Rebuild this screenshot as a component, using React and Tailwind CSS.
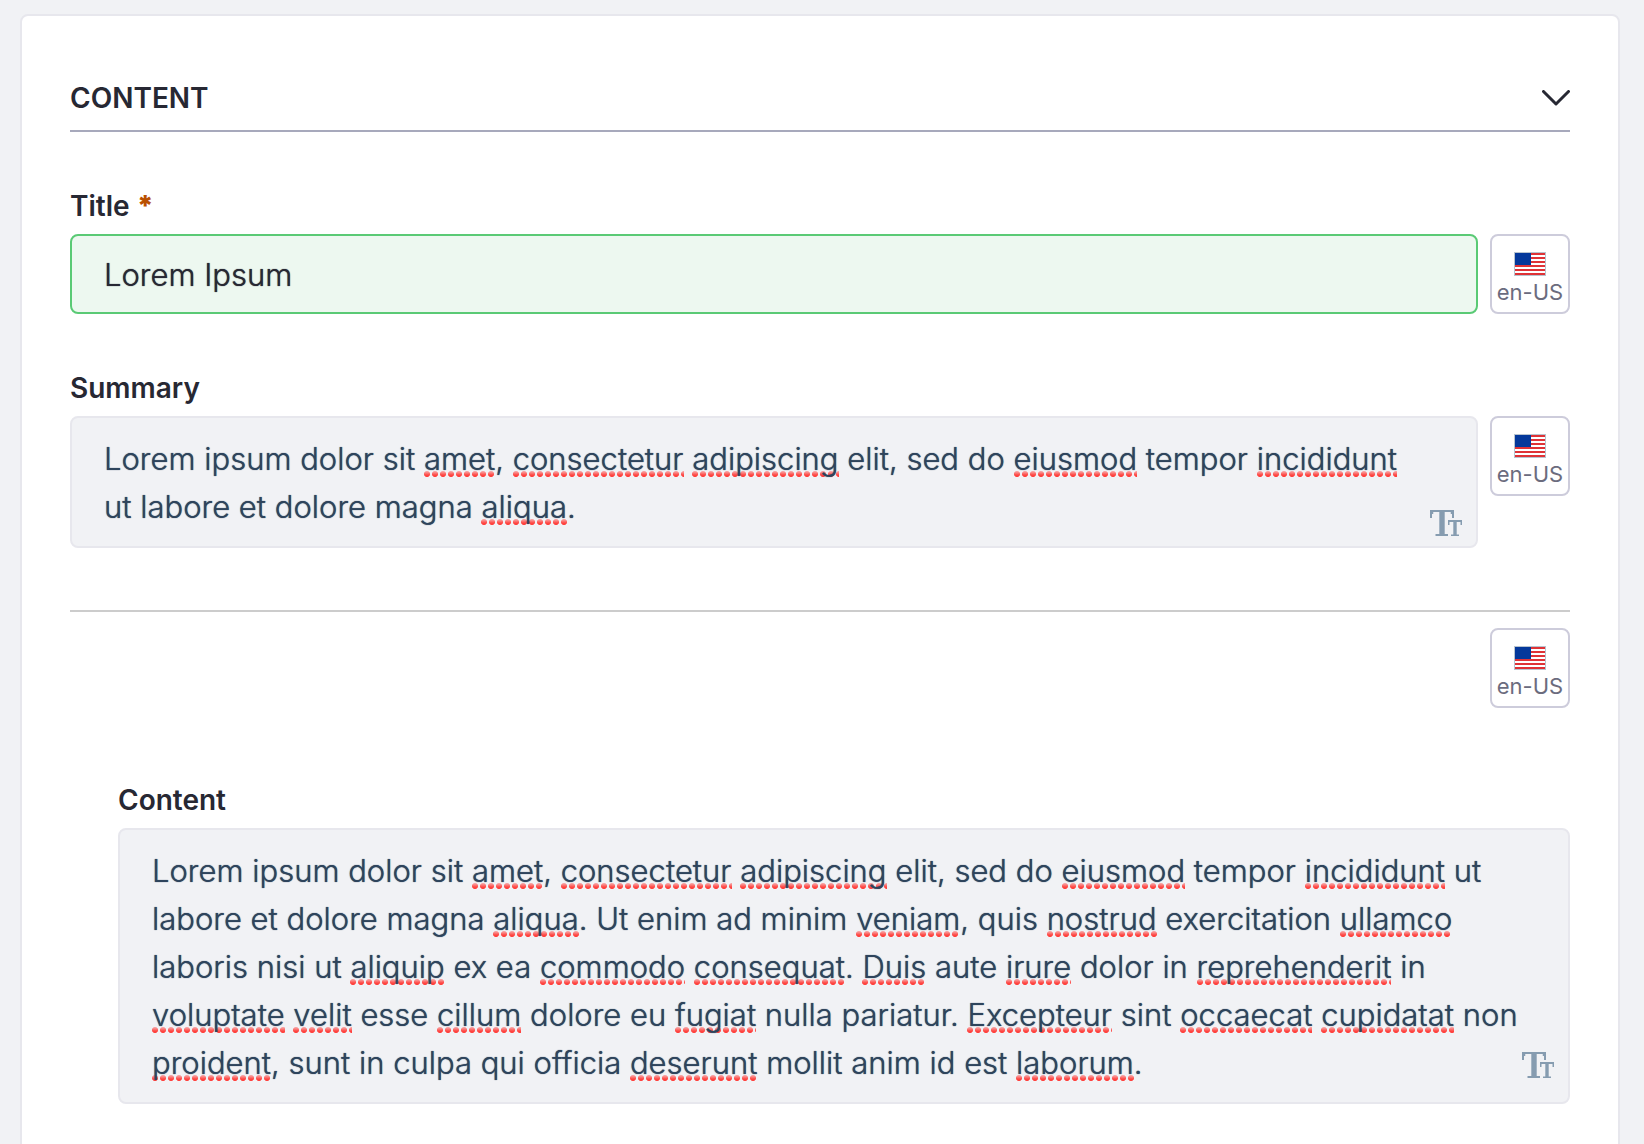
import React from "react";

function Flag() {
  return (
    <svg width="32" height="24" viewBox="0 0 32 24" aria-hidden="true" shapeRendering="crispEdges">
      <rect width="32" height="24" fill="#b9c4cf" />
      <rect x="1" y="1" width="30" height="22" fill="#fff" />
      {[1, 5, 9, 13, 17, 21].map((y) => (
        <rect key={y} x="1" y={y} width="30" height="2" fill="#df3236" />
      ))}
      <rect x="1" y="1" width="16" height="12" fill="#04389b" />
    </svg>
  );
}

function TextSizeIcon() {
  return (
    <svg width="32" height="26" viewBox="0 0 32 26" fill="none" stroke="currentColor" aria-hidden="true">
      <path d="M0 1H24" strokeWidth="2" />
      <path d="M1 1V8M23 1V8" strokeWidth="2" />
      <path d="M2.5 1V4M21.5 1V4" strokeWidth="1.5" />
      <path d="M12 1V26" strokeWidth="5.4" />
      <path d="M5.5 25H18" strokeWidth="2" />
      <path d="M18 11H32" strokeWidth="2" />
      <path d="M18.75 10.5V15M31.25 10.5V15" strokeWidth="1.5" />
      <path d="M25 11V26" strokeWidth="3.4" />
      <path d="M21 25.25H29" strokeWidth="1.5" />
    </svg>
  );
}

function LocaleButton() {
  return (
    <button
      type="button"
      className="flex h-20 w-20 shrink-0 flex-col items-center rounded-lg border-2 border-[#cdccdb] bg-white pt-4 text-[#6b6c7e]"
    >
      <Flag />
      <span className="whitespace-nowrap text-[22px] leading-8">en-US</span>
    </button>
  );
}

function Miss({ children }) {
  return (
    <span className="[background-image:linear-gradient(to_bottom,#f1f2f5a0,#f1f2f500_70%),radial-gradient(circle_at_3px_3px,#ff4440_2.6px,#ff444000_3.5px)] [background-position:left_bottom] [background-repeat:repeat-x] [background-size:8px_6px]">
      {children}
    </span>
  );
}

// Words wrapped in underscores carry the spelling underline.
function Prose({ text }) {
  return text
    .split("_")
    .map((part, i) => (i % 2 ? <Miss key={i}>{part}</Miss> : part));
}

function RichText({ id, labelId, text, iconClass, padClass }) {
  return (
    <div className="relative min-w-0 flex-1 rounded-lg border-2 border-[#e7e7ed] bg-[#f1f2f5]">
      <div
        id={id}
        role="textbox"
        aria-multiline="true"
        aria-labelledby={labelId}
        contentEditable
        suppressContentEditableWarning
        spellCheck={false}
        className={`pt-[17px] pb-[15px] pl-8 text-[31px] leading-[48px] font-light text-[#2e445c] outline-none [text-shadow:0_0_1px_#2e445c] ${padClass}`}
      >
        <Prose text={text} />
      </div>
      <button
        type="button"
        aria-label="Text format"
        className={`absolute right-3.5 text-[#869cb0] ${iconClass}`}
      >
        <TextSizeIcon />
      </button>
    </div>
  );
}

const LABEL = "block text-[28px] leading-10 font-semibold text-[#272833]";

export default function App() {
  return (
    <div className="h-screen overflow-hidden bg-[#f1f2f5] px-5 pt-3.5 font-['Inter',sans-serif]">
      <main className="mr-1 min-h-screen rounded-lg border-2 border-[#e7e7ed] bg-white px-12 pt-14">
        <header className="flex items-center justify-between border-b-2 border-[#a7a9bc] pt-1.5 pb-3 text-[#272833]">
          <h2 className="text-[28px] leading-10 font-semibold">CONTENT</h2>
          <button type="button" aria-label="Collapse content">
            <svg width="28" height="16" viewBox="0 0 28 16" fill="none" stroke="currentColor" strokeWidth="3" strokeLinecap="round" strokeLinejoin="round" aria-hidden="true">
              <path d="M1.5 1.5 14 14 26.5 1.5" />
            </svg>
          </button>
        </header>

        <div className="mt-[54px]">
          <label htmlFor="title" className={LABEL}>
            Title <span className="font-black text-[#b95000]">*</span>
          </label>
          <div className="mt-2 flex gap-3">
            <input
              id="title"
              type="text"
              required
              defaultValue="Lorem Ipsum"
              className="h-20 min-w-0 flex-1 rounded-lg border-2 border-[#5aca75] bg-[#edf8f0] px-8 text-[31px] font-light text-[#272833] outline-none [text-shadow:0_0_1px_#272833]"
            />
            <LocaleButton />
          </div>
        </div>

        <div className="mt-[54px]">
          <div id="summary-label" className={LABEL}>Summary</div>
          <div className="mt-2 flex items-start gap-3">
            <RichText
              id="summary"
              labelId="summary-label"
              text="Lorem ipsum dolor sit _amet_, _consectetur_ _adipiscing_ elit, sed do _eiusmod_ tempor _incididunt_ ut labore et dolore magna _aliqua_."
              iconClass="bottom-2.5"
              padClass="pr-12"
            />
            <LocaleButton />
          </div>
        </div>

        <section className="mt-[62px] border-t-2 border-[#cccccc] pt-4">
          <div className="flex justify-end">
            <LocaleButton />
          </div>
          <div className="mt-[72px] pl-12">
            <div id="content-label" className={LABEL}>Content</div>
            <div className="mt-2 flex">
              <RichText
                id="content"
                labelId="content-label"
                text="Lorem ipsum dolor sit _amet_, _consectetur_ _adipiscing_ elit, sed do _eiusmod_ tempor _incididunt_ ut labore et dolore magna _aliqua_. Ut enim ad minim _veniam_, quis _nostrud_ exercitation _ullamco_ laboris nisi ut _aliquip_ ex ea _commodo_ _consequat_. _Duis_ aute _irure_ dolor in _reprehenderit_ in _voluptate_ _velit_ esse _cillum_ dolore eu _fugiat_ nulla pariatur. _Excepteur_ sint _occaecat_ _cupidatat_ non _proident_, sunt in culpa qui officia _deserunt_ mollit anim id est _laborum_."
                iconClass="bottom-6"
                padClass="pr-6"
              />
            </div>
          </div>
        </section>
      </main>
    </div>
  );
}
